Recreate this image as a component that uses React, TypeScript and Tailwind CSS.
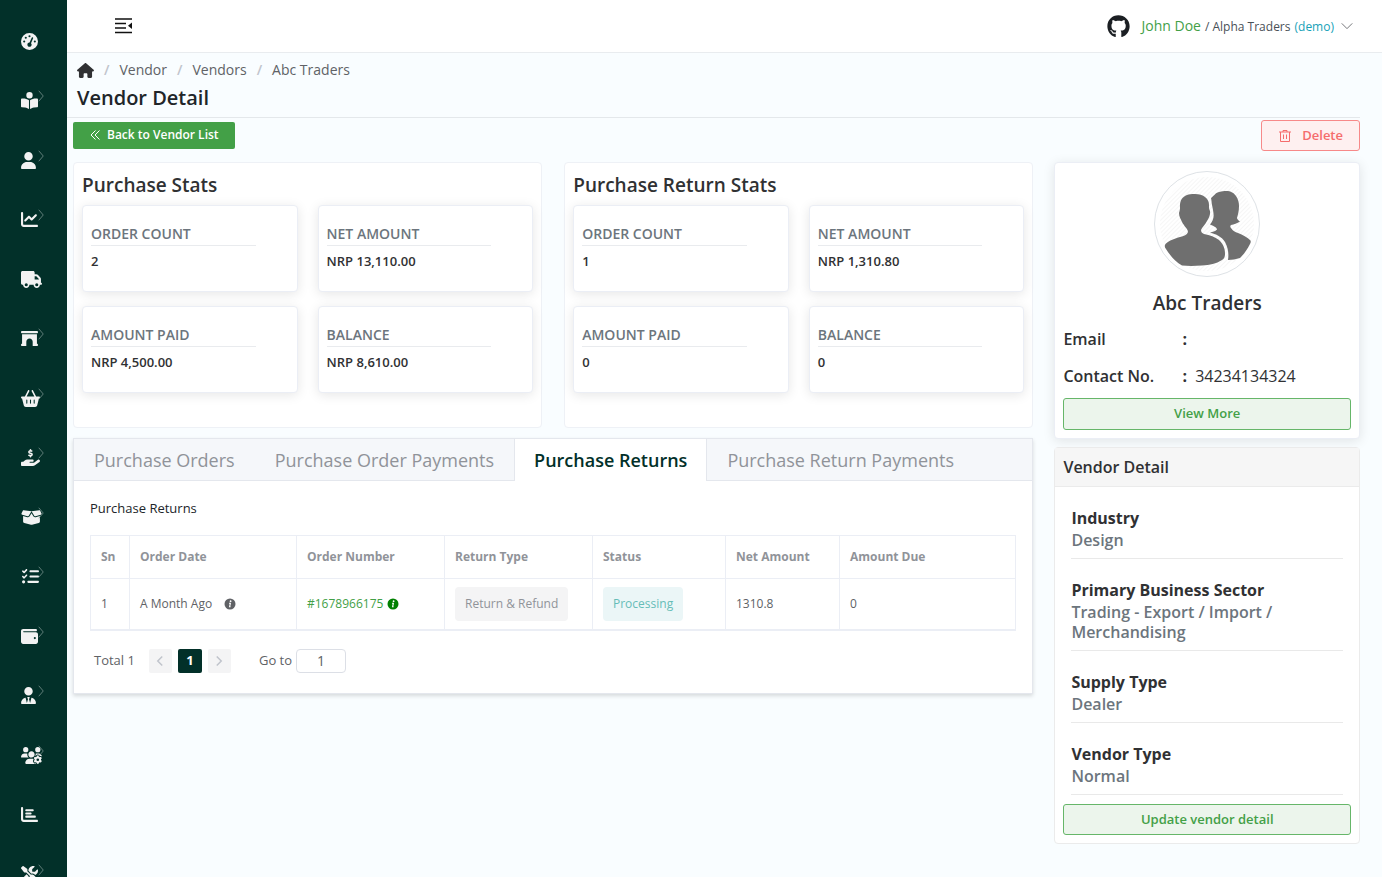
import { useState } from 'react';
import {
  FaGaugeHigh,
  FaBookOpenReader,
  FaUser,
  FaChartLine,
  FaTruck,
  FaArchway,
  FaBasketShopping,
  FaHandHoldingDollar,
  FaBoxOpen,
  FaListCheck,
  FaWallet,
  FaUserTie,
  FaUsersGear,
  FaChartBar,
  FaScrewdriverWrench,
  FaHouse,
  FaGithub,
} from 'react-icons/fa6';

const navItems = [
  { label: 'Dashboard', icon: FaGaugeHigh, size: 'w-[17px]', hasMenu: false },
  { label: 'Catalogue', icon: FaBookOpenReader, size: 'w-[17px]', hasMenu: true },
  { label: 'Customers', icon: FaUser, size: 'w-[15px]', hasMenu: true },
  { label: 'Sales', icon: FaChartLine, size: 'w-[17px]', hasMenu: true },
  { label: 'Delivery', icon: FaTruck, size: 'w-[21px]', hasMenu: false },
  { label: 'Vendor', icon: FaArchway, size: 'w-[17px]', hasMenu: true },
  { label: 'Purchase', icon: FaBasketShopping, size: 'w-[19px]', hasMenu: true },
  { label: 'Payments', icon: FaHandHoldingDollar, size: 'w-[19px]', hasMenu: true },
  { label: 'Inventory', icon: FaBoxOpen, size: 'w-[21px]', hasMenu: true },
  { label: 'Tasks', icon: FaListCheck, size: 'w-[19px]', hasMenu: true },
  { label: 'Accounts', icon: FaWallet, size: 'w-[17px]', hasMenu: true },
  { label: 'Staff', icon: FaUserTie, size: 'w-[15px]', hasMenu: true },
  { label: 'Users', icon: FaUsersGear, size: 'w-[21px]', hasMenu: true },
  { label: 'Reports', icon: FaChartBar, size: 'w-[17px]', hasMenu: false },
  { label: 'Settings', icon: FaScrewdriverWrench, size: 'w-[17px]', hasMenu: true },
];

const purchaseStats = [
  { label: 'ORDER COUNT', value: '2' },
  { label: 'NET AMOUNT', value: 'NRP 13,110.00' },
  { label: 'AMOUNT PAID', value: 'NRP 4,500.00' },
  { label: 'BALANCE', value: 'NRP 8,610.00' },
];

const returnStats = [
  { label: 'ORDER COUNT', value: '1' },
  { label: 'NET AMOUNT', value: 'NRP 1,310.80' },
  { label: 'AMOUNT PAID', value: '0' },
  { label: 'BALANCE', value: '0' },
];

const tabs = ['Purchase Orders', 'Purchase Order Payments', 'Purchase Returns', 'Purchase Return Payments'];

const columns = [
  { label: 'Sn', width: 'w-[39px]' },
  { label: 'Order Date', width: 'w-[167px]' },
  { label: 'Order Number', width: 'w-[148px]' },
  { label: 'Return Type', width: 'w-[148px]' },
  { label: 'Status', width: 'w-[133px]' },
  { label: 'Net Amount', width: 'w-[114px]' },
  { label: 'Amount Due', width: '' },
];

const details = [
  { label: 'Industry', value: 'Design' },
  { label: 'Primary Business Sector', value: 'Trading - Export / Import / Merchandising' },
  { label: 'Supply Type', value: 'Dealer' },
  { label: 'Vendor Type', value: 'Normal' },
];

function Chevron({ className, d = 'M5 1l6 7-6 7' }: { className: string; d?: string }) {
  return (
    <svg viewBox="0 0 16 16" className={className} fill="none" stroke="currentColor" aria-hidden="true">
      <path d={d} />
    </svg>
  );
}

function InfoIcon({ className }: { className: string }) {
  return (
    <svg viewBox="0 0 12 12" className={className} aria-hidden="true">
      <circle cx="6" cy="6" r="5.5" fill="currentColor" />
      <circle cx="6.6" cy="3.2" r="0.9" fill="#fff" />
      <path d="M5 5.2h1.4L5.6 8.8h1" stroke="#fff" strokeWidth="1.1" fill="none" />
    </svg>
  );
}

function StatsCard({ title, stats }: { title: string; stats: { label: string; value: string }[] }) {
  return (
    <section className="rounded border border-[#eef1f6] bg-white px-2 pt-2 pb-[34px]">
      <h2 className="text-[19px] leading-7 font-semibold text-[#303133]">{title}</h2>
      <div className="mt-1.5 grid grid-cols-2 gap-x-5 gap-y-3.5">
        {stats.map((stat) => (
          <div
            key={stat.label}
            className="h-[87px] rounded border border-[#ebeef5] bg-white px-2 pt-4 shadow-[0_2px_12px_0_rgba(0,0,0,0.1)]"
          >
            <div className="w-5/6 border-b border-[#e9ebee] pt-px text-[14px] leading-[22px] font-semibold text-[#6c757d]">
              {stat.label}
            </div>
            <div className="mt-[5px] text-[13px] leading-5 font-semibold text-[#303133]">{stat.value}</div>
          </div>
        ))}
      </div>
    </section>
  );
}

function Avatar() {
  return (
    <svg viewBox="0 0 106 106" className="mx-auto h-[106px] w-[106px]" role="img" aria-label="Vendor">
      <defs>
        <pattern id="hatch" width="3" height="3" patternUnits="userSpaceOnUse" patternTransform="rotate(45)">
          <path d="M0 0v3" stroke="#f6f6f6" strokeWidth="2" />
        </pattern>
      </defs>
      <circle cx="53" cy="53" r="52.5" fill="#fff" stroke="#dee2e6" />
      <circle cx="53" cy="53" r="47" fill="url(#hatch)" />
      <g fill="#6f6f6f">
        <path d="M57 27c3-2 4-5 8-6 3-1 5-1 7-1 5 0 8 2 10 5 2 3 3 6 3 10 0 5-1 8-2 12 0 1 2 3 3 3.500-3 2-6 3-9 3.500-1 1-1 2 0 3 2 3 4 4 7 5 5 2 9 4 12 7 1 1 1 2 0 4-3 6-6 10-10 14-4 1-8 2-12 2 1-7 0-12-3-18-3-5-9-8-15-9.500 3-.5 5-1 7-3 0-2-4-4-7-5 3-4 4-7 3.500-11-.5-4-1-6-1.500-8.500-.5-3-.5-5-1-7z" />
        <path d="M33 24c2-1 4-1 8-1 4 0 8 1 10 3 3 2 4 5 4 8 0 3 0 4 1 6 .5 4-1 7-3 10-2 4-5 6-6 9 0 2 1 3 3 4 6 1 11 3 15 6 4 4 6 8 6 14 0 3-1 5-3 6-6 4-12 5-20 5.500-8 .5-14 .5-20 0-7-4-12-10-17-18-.5-2 0-3 1-4 3-3 9-5 14-6.500 4-1 7-2 8-5 0-3-4-6-6-10-1-3-3-5-3-9 .5-2 1-3 1-5-.5-7 2-11 7-13z" />
      </g>
    </svg>
  );
}

export default function App() {
  const [activeTab, setActiveTab] = useState('Purchase Returns');
  const [page, setPage] = useState('1');

  return (
    <div className="flex h-screen overflow-hidden bg-[#f9fdff] font-['Open_Sans',sans-serif] text-[#303133]">
      {/* Sidebar */}
      <nav className="w-[67px] shrink-0 overflow-hidden bg-[#023029] pt-[11px]">
        <ul>
          {navItems.map(({ label, icon: Icon, size, hasMenu }) => (
            <li key={label} className="odd:h-[60px] even:h-[59px]">
              <a href="#" aria-label={label} className="flex h-full items-center pl-[21px] text-[#f2f2f2]">
                <span className="relative">
                  <Icon className={`h-[17px] ${size}`} />
                  {hasMenu && <Chevron className="absolute -top-0.5 left-3.5 h-3 w-3 text-[#7d9692]" />}
                </span>
              </a>
            </li>
          ))}
        </ul>
      </nav>

      <div className="min-w-0 flex-1">
        <header className="flex h-[53px] items-center justify-between border-b border-[#e9ecef] bg-white pr-7 pl-12">
          <button type="button" aria-label="Collapse menu">
            <svg viewBox="0 0 17 16" className="h-4 w-[17px]" stroke="#111" strokeWidth="1.5" aria-hidden="true">
              <path d="M0 1h17M0 5.500h11M0 10h11M0 14.500h17" />
              <path d="M13 7.700l4-3.200v6.400z" fill="#111" stroke="none" />
            </svg>
          </button>
          <button type="button" className="flex items-center text-[12px]">
            <FaGithub className="mr-3 h-[23px] w-[23px] text-[#1b1f23]" />
            <span className="flex items-baseline gap-1 pb-0.5">
              <span className="text-[14px] text-[#43a047]">John Doe</span>
              <span className="text-[#495057]">/ Alpha Traders</span>
              <span className="text-[#17a2b8]">(demo)</span>
            </span>
            <Chevron className="ml-1.5 h-3.5 w-3.5 text-[#606266]" d="M2 5l6 6 6-6" />
          </button>
        </header>

        <main className="pr-[22px] pl-1.5">
          <div className="-ml-1.5 border-b border-[#e4e8eb] pt-1.5 pl-2.5">
            <ol className="flex items-center text-[14px] leading-[22px] text-[#606266]">
              <li>
                <a href="#" aria-label="Home">
                  <FaHouse className="h-[15px] w-[17px] text-[#303133]" />
                </a>
              </li>
              {['Vendor', 'Vendors', 'Abc Traders'].map((crumb) => (
                <li key={crumb}>
                  <span className="mx-2.5 font-semibold text-[#c0c4cc]">/</span>
                  <a href="#">{crumb}</a>
                </li>
              ))}
            </ol>
            <h1 className="pt-[3px] pb-[5px] text-[20px] leading-7 font-semibold text-[#212529]">Vendor Detail</h1>
          </div>

          <div className="flex items-center justify-between pt-0.5">
            <button
              type="button"
              className="flex h-[27px] items-center rounded-xs bg-[#43a047] px-4 pb-0.5 text-[12px] font-semibold text-white"
            >
              <svg viewBox="0 0 12 12" className="mr-1.5 h-3 w-3" fill="none" stroke="currentColor" aria-hidden="true">
                <path d="M6.500 1.500L2 6l4.500 4.500M10.500 1.500L6 6l4.500 4.500" />
              </svg>
              Back to Vendor List
            </button>
            <button
              type="button"
              className="flex h-[31px] items-center rounded-[3px] border border-[#f78989] bg-[#fef0f0] px-4 text-[13px] font-semibold text-[#f56c6c]"
            >
              <svg viewBox="0 0 14 14" className="mr-2.5 h-3.5 w-3.5" fill="none" stroke="currentColor" aria-hidden="true">
                <path d="M1 3h12M5 3V1.500h4V3M2.500 3v9.500h9V3M5.500 5.500v4.500M8.500 5.500v4.500" />
              </svg>
              Delete
            </button>
          </div>

          <div className="mt-[11px] grid grid-cols-[22fr_7fr] items-start gap-[21px]">
            <div>
              <div className="grid grid-cols-2 gap-[22px]">
                <StatsCard title="Purchase Stats" stats={purchaseStats} />
                <StatsCard title="Purchase Return Stats" stats={returnStats} />
              </div>

              <section className="mt-2.5 border border-[#e4e7ed] bg-white shadow-[0_2px_4px_0_rgba(0,0,0,0.14)]">
                <div role="tablist" className="flex border-b border-[#e4e7ed] bg-[#f5f7fa]">
                  {tabs.map((tab) => (
                    <button
                      key={tab}
                      type="button"
                      role="tab"
                      aria-selected={tab === activeTab}
                      onClick={() => setActiveTab(tab)}
                      className={`-mb-px h-[42px] border-x px-[19px] text-[18px] ${
                        tab === activeTab
                          ? 'border-[#e4e7ed] bg-white font-semibold text-[#023029]'
                          : 'border-transparent text-[#909399]'
                      }`}
                    >
                      {tab}
                    </button>
                  ))}
                </div>

                <div className="px-4 pt-4 pb-5">
                  <h3 className="text-[13px] leading-[22px] text-[#212529]">Purchase Returns</h3>
                  <table className="mt-4 w-full table-fixed border border-[#ebeef5] border-b-2 text-[12px] text-[#606266]">
                    <thead>
                      <tr className="h-[43px] border-b border-[#ebeef5]">
                        {columns.map((col) => (
                          <th
                            key={col.label}
                            className={`border-r border-[#ebeef5] px-2.5 text-left font-bold text-[#909399] ${col.width}`}
                          >
                            {col.label}
                          </th>
                        ))}
                      </tr>
                    </thead>
                    <tbody>
                      <tr className="h-[51px] [&>td]:border-r [&>td]:border-[#ebeef5] [&>td]:px-2.5">
                        <td>1</td>
                        <td>
                          <span className="flex items-center">
                            A Month Ago
                            <InfoIcon className="ml-3 h-3 w-3" />
                          </span>
                        </td>
                        <td>
                          <a href="#" className="flex items-center text-[#43a047]">
                            #1678966175
                            <InfoIcon className="ml-1 h-3 w-3 text-[#008000]" />
                          </a>
                        </td>
                        <td>
                          <span className="inline-block rounded bg-[#f4f4f5] px-2.5 leading-[34px] text-[#909399]">
                            Return &amp; Refund
                          </span>
                        </td>
                        <td>
                          <span className="inline-block rounded bg-[#ebf6f7] px-2.5 leading-[34px] text-[#66bdb8]">
                            Processing
                          </span>
                        </td>
                        <td>1310.8</td>
                        <td>0</td>
                      </tr>
                    </tbody>
                  </table>

                  <div className="mt-[18px] flex items-center pl-1 text-[13px] text-[#606266]">
                    <span>Total 1</span>
                    <button
                      type="button"
                      aria-label="Previous page"
                      disabled
                      className="ml-3.5 flex h-6 w-[23px] items-center justify-center rounded-xs bg-[#f4f4f5] text-[#c0c4cc]"
                    >
                      <Chevron className="h-3 w-3 stroke-2" d="M11 2L5 8l6 6" />
                    </button>
                    <button type="button" className="ml-1.5 h-6 w-6 rounded-xs bg-[#023029] font-bold text-white">
                      1
                    </button>
                    <button
                      type="button"
                      aria-label="Next page"
                      disabled
                      className="ml-1.5 flex h-6 w-[23px] items-center justify-center rounded-xs bg-[#f4f4f5] text-[#c0c4cc]"
                    >
                      <Chevron className="h-3 w-3 stroke-2" d="M5 2l6 6-6 6" />
                    </button>
                    <label htmlFor="goto" className="ml-7">
                      Go to
                    </label>
                    <input
                      id="goto"
                      value={page}
                      onChange={(e) => setPage(e.target.value)}
                      className="ml-1 h-6 w-[50px] rounded border border-[#dcdfe6] bg-white text-center text-[14px]"
                    />
                  </div>
                </div>
              </section>
            </div>

            <aside>
              <section className="rounded border border-[#ebeef5] bg-white p-2 shadow-[0_2px_12px_0_rgba(0,0,0,0.1)]">
                <Avatar />
                <h2 className="mt-3 text-center text-[19px] leading-7 font-semibold">Abc Traders</h2>
                <dl className="mt-[11px] grid grid-cols-[119px_1fr] gap-y-[15px] text-[16px] leading-[22px]">
                  <dt className="font-semibold">Email</dt>
                  <dd className="font-bold">:</dd>
                  <dt className="font-semibold">Contact No.</dt>
                  <dd>
                    <b>:</b> <span className="ml-1">34234134324</span>
                  </dd>
                </dl>
                <button
                  type="button"
                  className="mt-[11px] h-8 w-full rounded-[3px] border border-[#66b669] bg-[#ecf5ec] text-[13px] font-semibold text-[#43a047]"
                >
                  View More
                </button>
              </section>

              <section className="mt-2 rounded border border-[#ebebeb] bg-white">
                <h3 className="border-b border-[#ebebeb] bg-[#f6f6f6] px-2 py-2 text-[16px] leading-[22px] font-semibold">
                  Vendor Detail
                </h3>
                <div className="px-2 pb-2">
                  <dl className="px-2">
                    {details.map((item) => (
                      <div key={item.label} className="border-b border-[#e9e9e9] pt-[19px] pb-2 text-[16px]">
                        <dt className="leading-6 font-bold">{item.label}</dt>
                        <dd className="leading-5 font-semibold text-[#6c757d]">{item.value}</dd>
                      </div>
                    ))}
                  </dl>
                  <button
                    type="button"
                    className="mt-[9px] h-[31px] w-full rounded-[3px] border border-[#66b669] bg-[#ecf5ec] text-[13px] font-semibold text-[#43a047]"
                  >
                    Update vendor detail
                  </button>
                </div>
              </section>
            </aside>
          </div>
        </main>
      </div>
    </div>
  );
}
